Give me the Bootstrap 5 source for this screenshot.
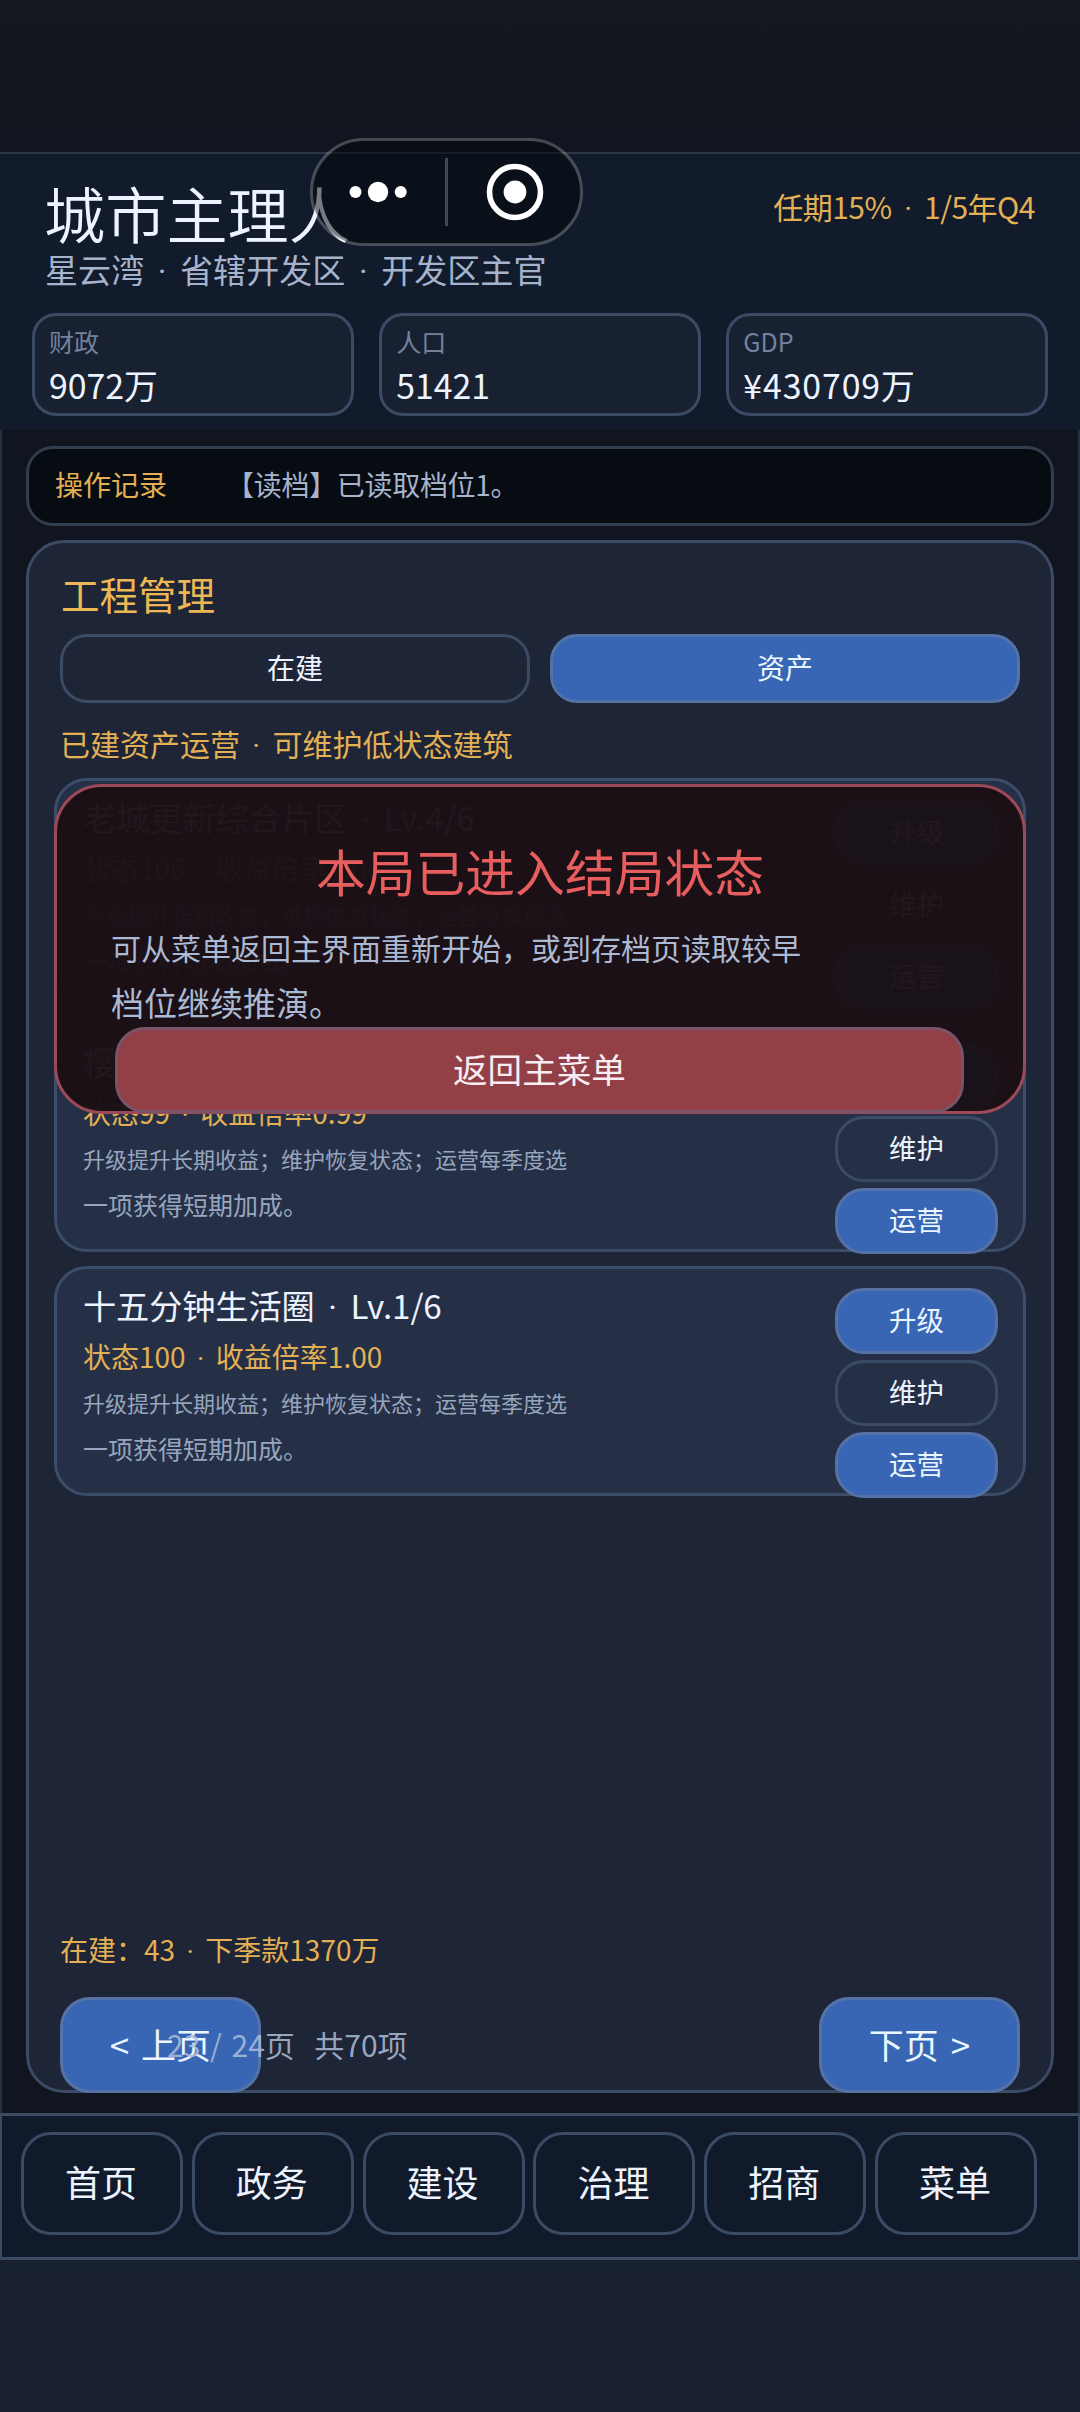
<!DOCTYPE html>
<html lang="zh-CN">
<head>
<meta charset="utf-8">
<meta name="viewport" content="width=device-width, initial-scale=1">
<title>城市主理人</title>
<link rel="stylesheet" href="https://cdn.jsdelivr.net/npm/bootstrap@5.3.0/dist/css/bootstrap.min.css">
<style>
:root{--line:#3c4b65;--gold:#e3b054;--ink:#edf3ff;--mute:#a6b3cc}
body{background:#10151f;color:var(--ink);font-family:"Noto Sans CJK SC",sans-serif;font-weight:400;width:1080px;height:2412px;overflow:hidden;white-space:nowrap}
.safe-top{height:152px;background:linear-gradient(#131820,#10151f)}
.safe-bottom{height:152px;background:linear-gradient(#172130,#1b2031 40%,#1a2030)}
.dot{display:inline-block;width:1.08em;line-height:1;text-align:center;font-family:Roboto,sans-serif}
.hud{height:278px;background:#111b2b;border-top:2px solid #2b3647;padding:23px 32px 0 32px}
.hud-title{font-size:61.2px;line-height:72px;padding-left:12px;font-weight:350;margin:0}
.hud-sub{font-size:33.1px;line-height:40px;padding-left:13px;color:var(--mute)}
.hud-term{font-size:30px;line-height:40px;margin:9px 13px 0 0;color:var(--gold);letter-spacing:-.5px}
.stats{margin-top:24px;gap:25.5px}
.stat{flex:1 1 0;height:103px;border:3px solid var(--line);border-radius:24px;background:#182131;padding:7px 14px}
.stat-k{font-size:25px;line-height:36px;color:#73829c}
.stat-v{font-size:33.8px;line-height:51px}
.stat-v.wide{letter-spacing:.9px}
.capsule{left:310px;top:138px;width:273px;height:108px;z-index:5}
.stage{height:1683px;border:solid #253246;border-width:0 2px;padding:16px 24px 20px;background:#10151f}
.oplog{height:80px;border:3px solid #323d4e;border-radius:27px;background:#070c12;padding:0 26px;font-size:28px;line-height:71px}
.oplog .msg{margin-left:59px;color:var(--mute);letter-spacing:-.3px}
.gold{color:var(--gold)}
.panel{height:1553px;margin-top:14px;border:3px solid var(--line);border-radius:38px;background:#1d2537;padding:25px 25px 0}
.inset{padding:0 6px}
.p-title{font-size:38.5px;line-height:50px;padding-left:7px;margin:0;font-weight:400;color:#edb755}
.tabs{margin-top:16px;gap:20px}
.pill{display:flex;align-items:center;justify-content:center;border:3px solid var(--line);color:var(--ink);border-radius:27px;padding:0 0 3px;font-size:28px;line-height:1;font-weight:400;background:transparent}
.pill.on{background:#3866b5;border-color:#5472a6;color:#e9f6ff}
.tabs .pill{height:69px;flex:1 1 0}
.p-sub{font-size:30px;line-height:40px;height:40px;margin-top:20px;padding-left:6px}
.assets{margin-top:15px;gap:14px}
.asset{height:230px;border:3px solid #3c4d69;border-radius:33px;background:#253047;padding:0 25px 0 26px}
.asset-txt{padding-top:14px}
.a1{font-size:33.2px;line-height:44px;height:44px;letter-spacing:-.1px}
.a2{font-size:28px;line-height:59px;height:59px}
.a3{font-size:22px;line-height:32px;color:#98a5be}
.a4{font-size:25px;line-height:60px;color:#98a5be}
.asset-btns{padding-top:19px;gap:6px}
.asset-btns .pill{width:163px;height:66px;font-size:27.4px;border-radius:29px;flex:none}
.sum{font-size:28px;line-height:40px;height:40px;padding-left:6px;margin-bottom:28px}
.pager{height:96px;margin-bottom:-3px}
.pager .pill{width:201px;height:96px;font-size:35px;border-radius:30px;flex:none;word-spacing:4px}
.pager-info{margin:-2px 0 0 -94px;font-size:30px;color:rgba(174,190,217,.85);z-index:1;word-spacing:3px}
.ending{left:25px;right:25px;top:241px;height:330px;border:3px solid #9c4958;border-radius:48px;background:rgba(26,16,21,.968);padding:54px 54px 0;z-index:2}
.ending h2{font-size:49.8px;line-height:58px;color:#e85d5e;font-weight:400;margin:0;text-align:center}
.e1{font-size:30px;line-height:40px;margin-top:28px}
.e2{font-size:33px;line-height:46px;margin-top:12px}
.e1,.e2{color:#acb9d3}
.pill.warn{width:849px;height:86px;margin:2px 0 0 4px;background:#933f46;border-color:#795469;font-size:34.6px;color:#f8edf2;border-radius:30px}
.dock{height:147px;border:solid var(--line);border-width:3px 2px;background:#101a2a;padding:16px 41px 0 19px;gap:8.8px}
.dock .pill{height:103px;flex:1 1 0;font-size:36px;border-radius:30px;padding:0 2px 5px 0}
</style>
</head>
<body class="position-relative m-0">
<div class="safe-top"></div>
<header class="hud">
  <div class="d-flex justify-content-between">
    <div>
      <h1 class="hud-title">城市主理人</h1>
      <div class="hud-sub">星云湾<span class="dot"> · </span>省辖开发区<span class="dot"> · </span>开发区主官</div>
    </div>
    <div class="hud-term">任期15%<span class="dot"> · </span>1/5年Q4</div>
  </div>
  <div class="stats d-flex">
    <div class="stat"><div class="stat-k">财政</div><div class="stat-v">9072万</div></div>
    <div class="stat"><div class="stat-k">人口</div><div class="stat-v">51421</div></div>
    <div class="stat"><div class="stat-k">GDP</div><div class="stat-v wide">¥430709万</div></div>
  </div>
</header>
<svg class="capsule position-absolute" viewBox="0 0 273 108" aria-hidden="true">
  <rect x="1.5" y="1.5" width="270" height="105" rx="52.5" fill="#04050a" fill-opacity=".5" stroke="#fff" stroke-opacity=".24" stroke-width="3"/>
  <circle cx="45.5" cy="54" r="6" fill="#fff"/><circle cx="68" cy="54" r="10.2" fill="#fff"/><circle cx="90.7" cy="54" r="6" fill="#fff"/>
  <path d="M136.5 20V88" stroke="#fff" stroke-opacity=".24" stroke-width="3"/>
  <circle cx="205" cy="54" r="25.5" fill="none" stroke="#fff" stroke-width="5.6"/><circle cx="205" cy="54" r="11.4" fill="#fff"/>
</svg>
<main class="stage">
  <div class="oplog d-flex"><span class="gold">操作记录</span><span class="msg">【读档】已读取档位1。</span></div>
  <section class="panel position-relative d-flex flex-column">
    <h2 class="p-title">工程管理</h2>
    <div class="tabs inset d-flex"><button class="pill">在建</button><button class="pill on">资产</button></div>
    <div class="p-sub gold">已建资产运营<span class="dot"> · </span>可维护低状态建筑</div>
    <div class="assets d-flex flex-column">
      <article class="asset d-flex justify-content-between">
        <div class="asset-txt"><div class="a1">老城更新综合片区<span class="dot"> · </span>Lv.4/6</div><div class="a2 gold">状态106<span class="dot"> · </span>收益倍率1.06</div><div class="a3">升级提升长期收益；维护恢复状态；运营每季度选</div><div class="a4">一项获得短期加成。</div></div>
        <div class="asset-btns d-flex flex-column"><button class="pill on">升级</button><button class="pill">维护</button><button class="pill on">运营</button></div>
      </article>
      <article class="asset d-flex justify-content-between">
        <div class="asset-txt"><div class="a1">樱</div><div class="a2 gold">状态99<span class="dot"> · </span>收益倍率0.99</div><div class="a3">升级提升长期收益；维护恢复状态；运营每季度选</div><div class="a4">一项获得短期加成。</div></div>
        <div class="asset-btns d-flex flex-column"><button class="pill on">升级</button><button class="pill">维护</button><button class="pill on">运营</button></div>
      </article>
      <article class="asset d-flex justify-content-between">
        <div class="asset-txt"><div class="a1">十五分钟生活圈<span class="dot"> · </span>Lv.1/6</div><div class="a2 gold">状态100<span class="dot"> · </span>收益倍率1.00</div><div class="a3">升级提升长期收益；维护恢复状态；运营每季度选</div><div class="a4">一项获得短期加成。</div></div>
        <div class="asset-btns d-flex flex-column"><button class="pill on">升级</button><button class="pill">维护</button><button class="pill on">运营</button></div>
      </article>
    </div>
    <div class="sum gold mt-auto">在建：43<span class="dot"> · </span>下季款1370万</div>
    <div class="pager inset d-flex align-items-center">
      <button class="pill on">&lt; 上页</button>
      <span class="pager-info">23 / 24页&nbsp; 共70项</span>
      <button class="pill on ms-auto">下页 &gt;</button>
    </div>
    <div class="ending position-absolute">
      <h2>本局已进入结局状态</h2>
      <div class="e1">可从菜单返回主界面重新开始，或到存档页读取较早</div>
      <div class="e2">档位继续推演。</div>
      <button class="pill warn">返回主菜单</button>
    </div>
  </section>
</main>
<nav class="dock d-flex">
  <button class="pill">首页</button><button class="pill">政务</button><button class="pill">建设</button><button class="pill">治理</button><button class="pill">招商</button><button class="pill">菜单</button>
</nav>
<div class="safe-bottom"></div>
<script src="https://cdn.jsdelivr.net/npm/bootstrap@5.3.0/dist/js/bootstrap.bundle.min.js"></script>
</body>
</html>
